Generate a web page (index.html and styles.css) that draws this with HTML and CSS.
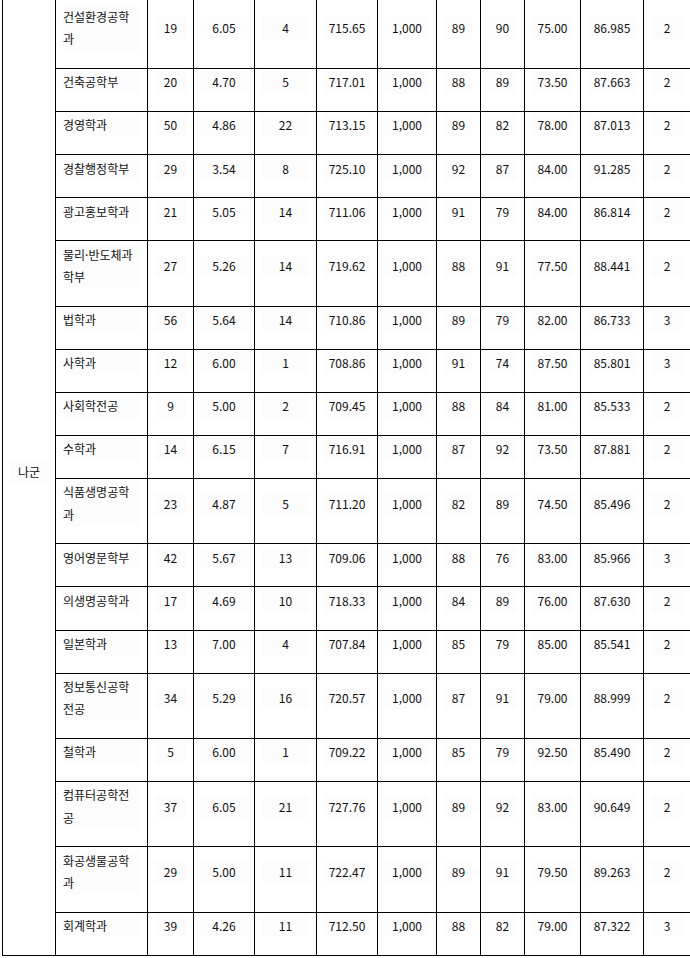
FILE: index.html
```html
<!DOCTYPE html>
<html lang="ko">
<head>
<meta charset="utf-8">
<link rel="stylesheet" href="styles.css">
</head>
<body>
<table class="grid">
<colgroup>
<col class="c-group"><col class="c-dept"><col class="c-n3"><col class="c-n4"><col class="c-n5"><col class="c-n6"><col class="c-n7"><col class="c-n8"><col class="c-n9"><col class="c-n10"><col class="c-n11"><col class="c-n12">
</colgroup>
<tbody>
<tr class="first"><td class="group" rowspan="19"><p>나군</p></td><td class="dept"><p>건설환경공학과</p></td><td><p>19</p></td><td><p>6.05</p></td><td><p>4</p></td><td><p>715.65</p></td><td><p>1,000</p></td><td><p>89</p></td><td><p>90</p></td><td><p>75.00</p></td><td><p>86.985</p></td><td><p>2</p></td></tr>
<tr><td class="dept"><p>건축공학부</p></td><td><p>20</p></td><td><p>4.70</p></td><td><p>5</p></td><td><p>717.01</p></td><td><p>1,000</p></td><td><p>88</p></td><td><p>89</p></td><td><p>73.50</p></td><td><p>87.663</p></td><td><p>2</p></td></tr>
<tr><td class="dept"><p>경영학과</p></td><td><p>50</p></td><td><p>4.86</p></td><td><p>22</p></td><td><p>713.15</p></td><td><p>1,000</p></td><td><p>89</p></td><td><p>82</p></td><td><p>78.00</p></td><td><p>87.013</p></td><td><p>2</p></td></tr>
<tr><td class="dept"><p>경찰행정학부</p></td><td><p>29</p></td><td><p>3.54</p></td><td><p>8</p></td><td><p>725.10</p></td><td><p>1,000</p></td><td><p>92</p></td><td><p>87</p></td><td><p>84.00</p></td><td><p>91.285</p></td><td><p>2</p></td></tr>
<tr><td class="dept"><p>광고홍보학과</p></td><td><p>21</p></td><td><p>5.05</p></td><td><p>14</p></td><td><p>711.06</p></td><td><p>1,000</p></td><td><p>91</p></td><td><p>79</p></td><td><p>84.00</p></td><td><p>86.814</p></td><td><p>2</p></td></tr>
<tr><td class="dept"><p>물리·반도체과학부</p></td><td><p>27</p></td><td><p>5.26</p></td><td><p>14</p></td><td><p>719.62</p></td><td><p>1,000</p></td><td><p>88</p></td><td><p>91</p></td><td><p>77.50</p></td><td><p>88.441</p></td><td><p>2</p></td></tr>
<tr><td class="dept"><p>법학과</p></td><td><p>56</p></td><td><p>5.64</p></td><td><p>14</p></td><td><p>710.86</p></td><td><p>1,000</p></td><td><p>89</p></td><td><p>79</p></td><td><p>82.00</p></td><td><p>86.733</p></td><td><p>3</p></td></tr>
<tr><td class="dept"><p>사학과</p></td><td><p>12</p></td><td><p>6.00</p></td><td><p>1</p></td><td><p>708.86</p></td><td><p>1,000</p></td><td><p>91</p></td><td><p>74</p></td><td><p>87.50</p></td><td><p>85.801</p></td><td><p>3</p></td></tr>
<tr><td class="dept"><p>사회학전공</p></td><td><p>9</p></td><td><p>5.00</p></td><td><p>2</p></td><td><p>709.45</p></td><td><p>1,000</p></td><td><p>88</p></td><td><p>84</p></td><td><p>81.00</p></td><td><p>85.533</p></td><td><p>2</p></td></tr>
<tr><td class="dept"><p>수학과</p></td><td><p>14</p></td><td><p>6.15</p></td><td><p>7</p></td><td><p>716.91</p></td><td><p>1,000</p></td><td><p>87</p></td><td><p>92</p></td><td><p>73.50</p></td><td><p>87.881</p></td><td><p>2</p></td></tr>
<tr><td class="dept"><p>식품생명공학과</p></td><td><p>23</p></td><td><p>4.87</p></td><td><p>5</p></td><td><p>711.20</p></td><td><p>1,000</p></td><td><p>82</p></td><td><p>89</p></td><td><p>74.50</p></td><td><p>85.496</p></td><td><p>2</p></td></tr>
<tr><td class="dept"><p>영어영문학부</p></td><td><p>42</p></td><td><p>5.67</p></td><td><p>13</p></td><td><p>709.06</p></td><td><p>1,000</p></td><td><p>88</p></td><td><p>76</p></td><td><p>83.00</p></td><td><p>85.966</p></td><td><p>3</p></td></tr>
<tr><td class="dept"><p>의생명공학과</p></td><td><p>17</p></td><td><p>4.69</p></td><td><p>10</p></td><td><p>718.33</p></td><td><p>1,000</p></td><td><p>84</p></td><td><p>89</p></td><td><p>76.00</p></td><td><p>87.630</p></td><td><p>2</p></td></tr>
<tr><td class="dept"><p>일본학과</p></td><td><p>13</p></td><td><p>7.00</p></td><td><p>4</p></td><td><p>707.84</p></td><td><p>1,000</p></td><td><p>85</p></td><td><p>79</p></td><td><p>85.00</p></td><td><p>85.541</p></td><td><p>2</p></td></tr>
<tr><td class="dept"><p>정보통신공학전공</p></td><td><p>34</p></td><td><p>5.29</p></td><td><p>16</p></td><td><p>720.57</p></td><td><p>1,000</p></td><td><p>87</p></td><td><p>91</p></td><td><p>79.00</p></td><td><p>88.999</p></td><td><p>2</p></td></tr>
<tr><td class="dept"><p>철학과</p></td><td><p>5</p></td><td><p>6.00</p></td><td><p>1</p></td><td><p>709.22</p></td><td><p>1,000</p></td><td><p>85</p></td><td><p>79</p></td><td><p>92.50</p></td><td><p>85.490</p></td><td><p>2</p></td></tr>
<tr><td class="dept"><p>컴퓨터공학전공</p></td><td><p>37</p></td><td><p>6.05</p></td><td><p>21</p></td><td><p>727.76</p></td><td><p>1,000</p></td><td><p>89</p></td><td><p>92</p></td><td><p>83.00</p></td><td><p>90.649</p></td><td><p>2</p></td></tr>
<tr><td class="dept"><p>화공생물공학과</p></td><td><p>29</p></td><td><p>5.00</p></td><td><p>11</p></td><td><p>722.47</p></td><td><p>1,000</p></td><td><p>89</p></td><td><p>91</p></td><td><p>79.50</p></td><td><p>89.263</p></td><td><p>2</p></td></tr>
<tr><td class="dept"><p>회계학과</p></td><td><p>39</p></td><td><p>4.26</p></td><td><p>11</p></td><td><p>712.50</p></td><td><p>1,000</p></td><td><p>88</p></td><td><p>82</p></td><td><p>79.00</p></td><td><p>87.322</p></td><td><p>3</p></td></tr>
</tbody>
</table>
</body>
</html>
```

FILE: styles.css
```css
html, body {
  margin: 0;
  padding: 0;
  background: #fff;
  overflow: hidden;
}

.grid {
  margin-left: 2px;
  border-collapse: collapse;
  table-layout: fixed;
  width: 688px;
  font-family: "Noto Sans CJK KR", "Noto Sans", sans-serif;
  font-size: 12px;
  color: #111;
}

.c-group { width: 53px; }
.c-dept { width: 92px; }
.c-n3 { width: 46px; }
.c-n4 { width: 61px; }
.c-n5 { width: 62px; }
.c-n6 { width: 61px; }
.c-n7 { width: 59px; }
.c-n8 { width: 44px; }
.c-n9 { width: 44px; }
.c-n10 { width: 56px; }
.c-n11 { width: 63px; }
.c-n12 { width: 47px; }

.grid td {
  border: 1px solid #000;
  padding: 2.4px 7px 17.4px;
  line-height: 22.3px;
  vertical-align: middle;
  text-align: center;
}

.grid td:last-child {
  border-right-color: #fff;
}

.grid td p {
  margin: 0;
  background: #fcfcfc;
}

.grid td.dept {
  text-align: left;
}

.grid tr.first td {
  border-top: 0;
  padding-top: 6px;
}
```
